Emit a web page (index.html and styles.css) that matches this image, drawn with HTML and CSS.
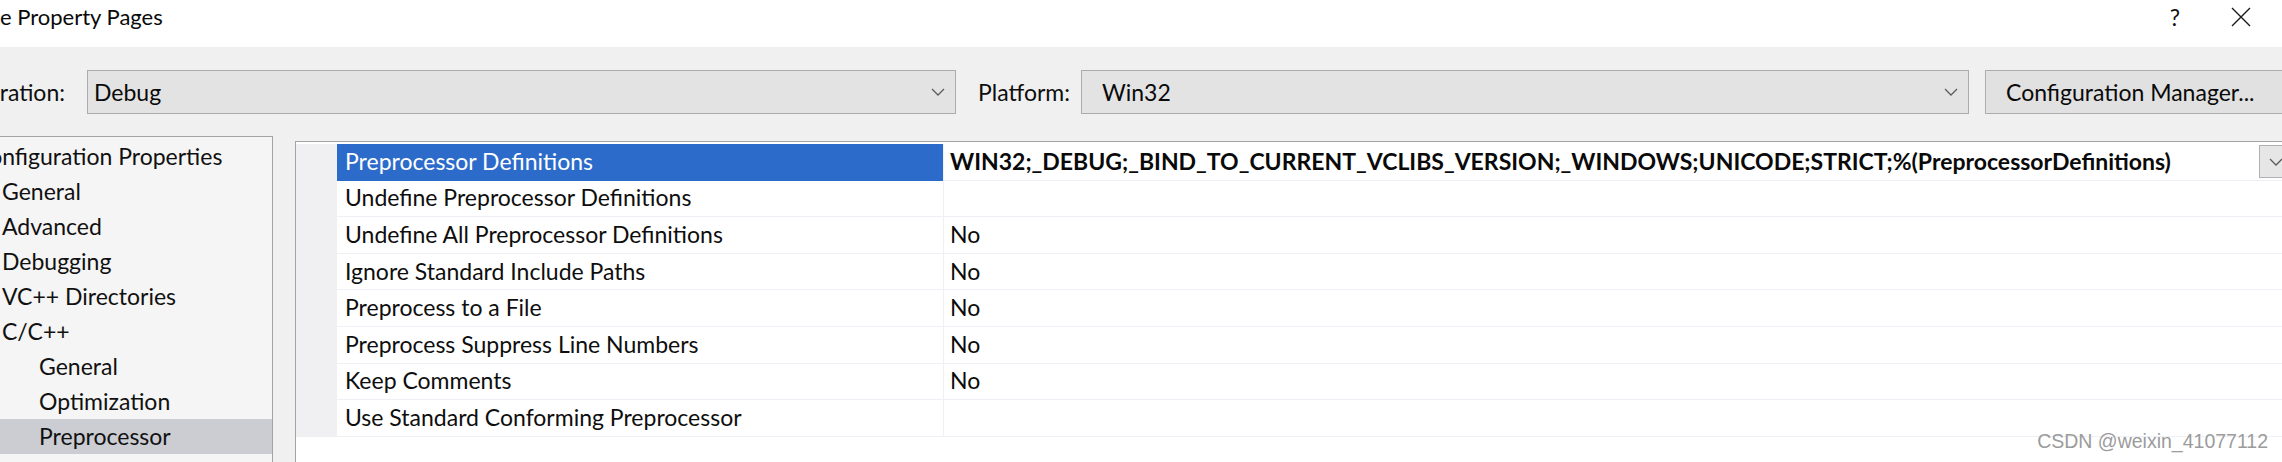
FILE: index.html
```html
<!DOCTYPE html>
<html>
<head>
<meta charset="utf-8">
<title>Property Pages</title>
<link rel="stylesheet" href="styles.css">
</head>
<body>
<div class="window">
  <header class="titlebar">
    <span class="title">e Property Pages</span>
    <div class="caption">
      <span class="help">?</span>
      <span class="close"><svg width="22" height="22" viewBox="0 0 22 22"><path d="M2 2 L20 20 M20 2 L2 20" stroke="#1a1a1a" stroke-width="1.4" fill="none"/></svg></span>
    </div>
  </header>

  <div class="toolbar">
    <span class="label cfg-label"><span>Configuration:</span></span>
    <div class="combo cfg-combo">
      <span class="combo-text">Debug</span>
      <svg class="chev" width="14" height="8" viewBox="0 0 14 8"><path d="M1 1 L7 7 L13 1" stroke="#5c5c5c" stroke-width="1.3" fill="none"/></svg>
    </div>
    <span class="label plat-label">Platform:</span>
    <div class="combo plat-combo">
      <span class="combo-text">Win32</span>
      <svg class="chev" width="14" height="8" viewBox="0 0 14 8"><path d="M1 1 L7 7 L13 1" stroke="#5c5c5c" stroke-width="1.3" fill="none"/></svg>
    </div>
    <button class="btn">Configuration Manager...</button>
  </div>

  <div class="main">
    <nav class="tree">
      <div class="node lvl0">Configuration Properties</div>
      <div class="node lvl1">General</div>
      <div class="node lvl1">Advanced</div>
      <div class="node lvl1">Debugging</div>
      <div class="node lvl1">VC++ Directories</div>
      <div class="node lvl1">C/C++</div>
      <div class="node lvl2">General</div>
      <div class="node lvl2">Optimization</div>
      <div class="node lvl2 selected">Preprocessor</div>
      <div class="node lvl2">Code Generation</div>
    </nav>

    <section class="grid">
      <div class="row active">
        <div class="gutter"></div>
        <div class="name">Preprocessor Definitions</div>
        <div class="value">
          <span class="val-text bold">WIN32;_DEBUG;_BIND_TO_CURRENT_VCLIBS_VERSION;_WINDOWS;UNICODE;STRICT;%(PreprocessorDefinitions)</span>
          <span class="drop"><svg width="14" height="8" viewBox="0 0 14 8"><path d="M1 1 L7 7 L13 1" stroke="#5c5c5c" stroke-width="1.3" fill="none"/></svg></span>
        </div>
      </div>
      <div class="row">
        <div class="gutter"></div>
        <div class="name">Undefine Preprocessor Definitions</div>
        <div class="value"></div>
      </div>
      <div class="row">
        <div class="gutter"></div>
        <div class="name">Undefine All Preprocessor Definitions</div>
        <div class="value">No</div>
      </div>
      <div class="row">
        <div class="gutter"></div>
        <div class="name">Ignore Standard Include Paths</div>
        <div class="value">No</div>
      </div>
      <div class="row">
        <div class="gutter"></div>
        <div class="name">Preprocess to a File</div>
        <div class="value">No</div>
      </div>
      <div class="row">
        <div class="gutter"></div>
        <div class="name">Preprocess Suppress Line Numbers</div>
        <div class="value">No</div>
      </div>
      <div class="row">
        <div class="gutter"></div>
        <div class="name">Keep Comments</div>
        <div class="value">No</div>
      </div>
      <div class="row">
        <div class="gutter"></div>
        <div class="name">Use Standard Conforming Preprocessor</div>
        <div class="value"></div>
      </div>
    </section>
  </div>

  <div class="watermark">CSDN @weixin_41077112</div>
</div>
</body>
</html>
```

FILE: styles.css
```css
* { box-sizing: border-box; }

html, body {
  margin: 0;
  padding: 0;
}

body {
  width: 2282px;
  height: 462px;
  overflow: hidden;
  background: #f0f0f0;
  font-family: Lato, "Noto Sans", sans-serif;
  font-size: 23px;
  color: #0e0e0e;
}

.window {
  position: relative;
  width: 2282px;
  height: 462px;
  overflow: hidden;
  display: flex;
  flex-direction: column;
}

/* Title bar */
.titlebar {
  height: 47px;
  flex: none;
  background: #ffffff;
  display: flex;
  align-items: flex-start;
  justify-content: space-between;
}

.title {
  font-size: 22px;
  line-height: 28px;
  padding-top: 3px;
  color: #0a0a0a;
}

.caption {
  display: flex;
  align-items: center;
  height: 34px;
  padding-right: 30px;
}

.help {
  font-size: 23px;
  color: #111;
  margin-right: 50px;
}

.close {
  display: flex;
}

/* Toolbar */
.toolbar {
  flex: none;
  height: 89px;
  padding-top: 23px;
  display: flex;
  align-items: flex-start;
}

.toolbar > * { flex: none; }

.label {
  height: 44px;
  display: flex;
  align-items: center;
  white-space: nowrap;
  color: #0e0e0e;
}

.cfg-label {
  width: 65px;
  overflow: hidden;
  justify-content: flex-end;
  margin-right: 22px;
}

.plat-label {
  margin-left: 22px;
  width: 103px;
}

.combo {
  height: 44px;
  background: #e3e3e3;
  border: 1px solid #acacac;
  display: flex;
  align-items: center;
  justify-content: space-between;
  padding-left: 6px;
  padding-right: 10px;
}

.cfg-combo { width: 869px; }
.plat-combo { width: 888px; padding-left: 20px; }

.combo-text { color: #0a0a0a; }

.btn {
  margin-left: 16px;
  width: 320px;
  height: 44px;
  background: #e1e1e1;
  border: 1px solid #adadad;
  font-family: inherit;
  font-size: 23px;
  color: #0a0a0a;
  text-align: left;
  padding: 0 0 0 20px;
}

/* Main area */
.main {
  flex: 1;
  display: flex;
  align-items: flex-start;
  min-height: 0;
}

.tree {
  width: 273px;
  height: 340px;
  flex: none;
  background: #f5f5f5;
  border-top: 1px solid #a3a3a3;
  border-right: 1px solid #a3a3a3;
  padding-top: 1.5px;
  overflow: hidden;
}

.node {
  height: 35px;
  line-height: 35px;
  white-space: nowrap;
  color: #111;
}

.lvl0 { padding-left: 0; margin-left: -26px; }
.lvl1 { padding-left: 2px; }
.lvl2 { padding-left: 39px; }

.node.selected { background: #cbcdd2; }

/* Property grid */
.grid {
  margin-left: 22px;
  margin-top: 5px;
  width: 2010px;
  height: 330px;
  flex: none;
  background: #ffffff;
  border-top: 1px solid #a3a3a3;
  border-left: 1px solid #a3a3a3;
  padding-top: 2px;
}

.row {
  display: grid;
  grid-template-columns: 41px 606px 1fr;
  height: 36.6px;
}

.gutter {
  background: #f0f0f2;
}

.name {
  padding-left: 8px;
  padding-bottom: 2px;
  display: flex;
  align-items: center;
  white-space: nowrap;
  border-bottom: 1px solid #eef0f6;
  color: #0e0e0e;
}

.value {
  padding-left: 6px;
  padding-bottom: 2px;
  display: flex;
  align-items: center;
  justify-content: space-between;
  white-space: nowrap;
  border-left: 1px solid #eef0f6;
  border-bottom: 1px solid #eef0f6;
  color: #0a0a0a;
}

.row.active .name {
  background: #2c6bca;
  color: #ffffff;
  border-bottom-color: #2c6bca;
}

.bold { font-weight: 700; }

.drop {
  width: 46px;
  height: 33px;
  align-self: flex-start;
  margin-top: 1px;
  background: #e6e6e6;
  border: 1px solid #b0b0b0;
  display: flex;
  align-items: center;
  padding-left: 9px;
}

/* Watermark */
.watermark {
  position: absolute;
  right: 14px;
  bottom: 9px;
  font-family: "Liberation Sans", Arial, sans-serif;
  font-size: 19.5px;
  color: #9b9b9b;
  text-shadow: 0 0 1px #ffffff;
}
```
